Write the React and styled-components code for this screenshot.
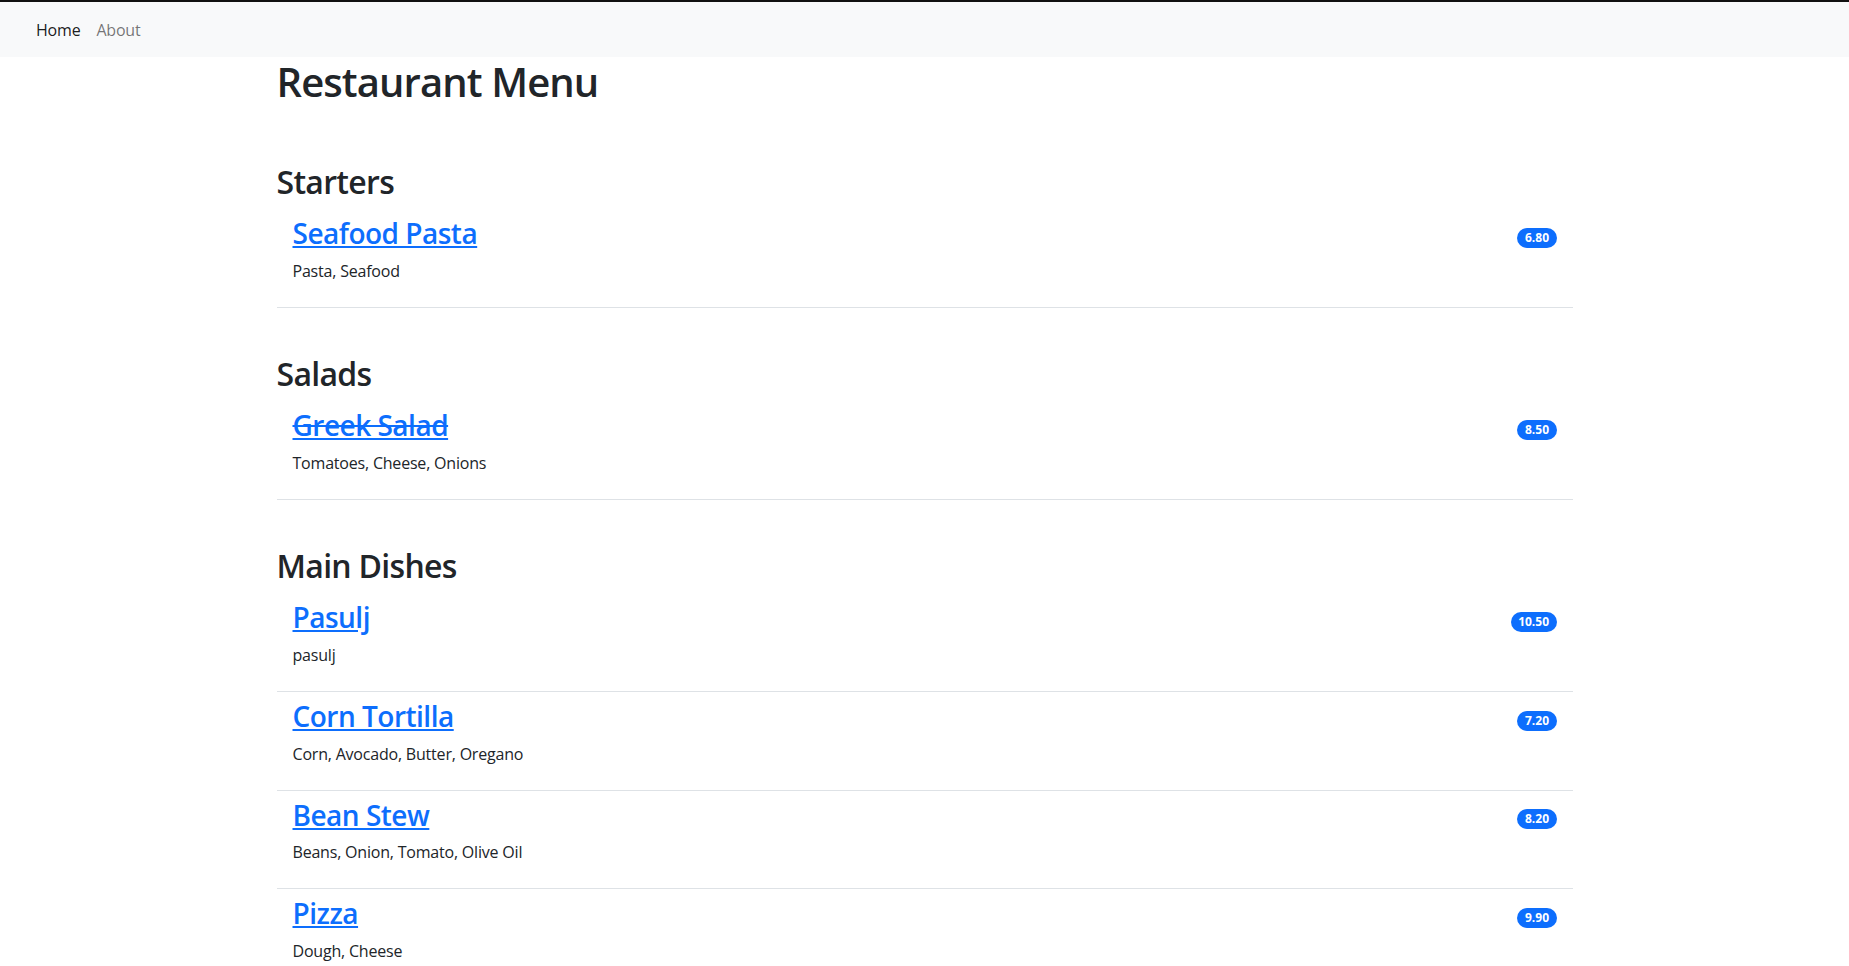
import React from "react";
import styled, { createGlobalStyle } from "styled-components";

const GlobalStyle = createGlobalStyle`
  * {
    box-sizing: border-box;
  }

  body {
    margin: 0;
    font-family: "Open Sans", "Noto Sans", sans-serif;
    font-size: 16px;
    line-height: 1.5;
    color: #212529;
    background: #fff;
    border-top: 2px solid #111;
  }
`;

const Navbar = styled.nav`
  display: flex;
  align-items: center;
  height: 55px;
  padding: 0 28px;
  background-color: #f8f9fa;
`;

const NavLink = styled.a`
  padding: 8px;
  font-size: 16px;
  letter-spacing: -0.2px;
  color: ${(p) => (p.$active ? "rgba(0, 0, 0, 0.9)" : "rgba(0, 0, 0, 0.55)")};
  text-decoration: none;
  cursor: pointer;
`;

const Container = styled.main`
  display: flex;
  flex-direction: column;
  max-width: 1320px;
  margin: 0 auto;
  padding: 0 12px;
`;

const Title = styled.h1`
  margin: 1px 0 10px;
  font-size: 40px;
  font-weight: 600;
  line-height: 1.2;
  letter-spacing: -0.9px;
`;

const Section = styled.section`
  margin-top: 47px;
`;

const SectionTitle = styled.h2`
  margin: 0 0 8px;
  font-size: 32px;
  font-weight: 600;
  line-height: 1.2;
  letter-spacing: -0.7px;
`;

const List = styled.ul`
  list-style: none;
  margin: 0;
  padding: 0;
`;

const Item = styled.li`
  padding: 8px 16px;
  border-bottom: 1px solid #dee2e6;
`;

const ItemHeader = styled.div`
  display: flex;
  align-items: center;
  justify-content: space-between;
  margin-bottom: 8px;
`;

const ItemName = styled.a`
  font-size: 28px;
  font-weight: 600;
  line-height: 1.2;
  letter-spacing: -0.5px;
  color: #0d6efd;
  text-decoration: ${(p) => (p.$unavailable ? "underline line-through" : "underline")};
  cursor: pointer;
`;

const Price = styled.span`
  display: inline-block;
  margin-top: 8px;
  padding: 4px 7.5px;
  font-size: 12px;
  font-weight: 700;
  line-height: 12px;
  color: #fff;
  background-color: #0d6efd;
  border-radius: 50rem;
`;

const Ingredients = styled.p`
  margin: 0 0 16px;
  font-size: 16px;
  letter-spacing: -0.2px;
`;

const menu = [
  {
    name: "Starters",
    items: [{ name: "Seafood Pasta", ingredients: "Pasta, Seafood", price: "6.80" }],
  },
  {
    name: "Salads",
    items: [
      { name: "Greek Salad", ingredients: "Tomatoes, Cheese, Onions", price: "8.50", unavailable: true },
    ],
  },
  {
    name: "Main Dishes",
    items: [
      { name: "Pasulj", ingredients: "pasulj", price: "10.50" },
      { name: "Corn Tortilla", ingredients: "Corn, Avocado, Butter, Oregano", price: "7.20" },
      { name: "Bean Stew", ingredients: "Beans, Onion, Tomato, Olive Oil", price: "8.20" },
      { name: "Pizza", ingredients: "Dough, Cheese", price: "9.90" },
    ],
  },
];

const App = () => {
  return (
    <>
      <GlobalStyle />
      <Navbar>
        <NavLink $active>Home</NavLink>
        <NavLink>About</NavLink>
      </Navbar>
      <Container>
        <Title>Restaurant Menu</Title>
        {menu.map((category) => (
          <Section key={category.name}>
            <SectionTitle>{category.name}</SectionTitle>
            <List>
              {category.items.map((item) => (
                <Item key={item.name}>
                  <ItemHeader>
                    <ItemName $unavailable={item.unavailable}>{item.name}</ItemName>
                    <Price>{item.price}</Price>
                  </ItemHeader>
                  <Ingredients>{item.ingredients}</Ingredients>
                </Item>
              ))}
            </List>
          </Section>
        ))}
      </Container>
    </>
  );
};

export default App;
